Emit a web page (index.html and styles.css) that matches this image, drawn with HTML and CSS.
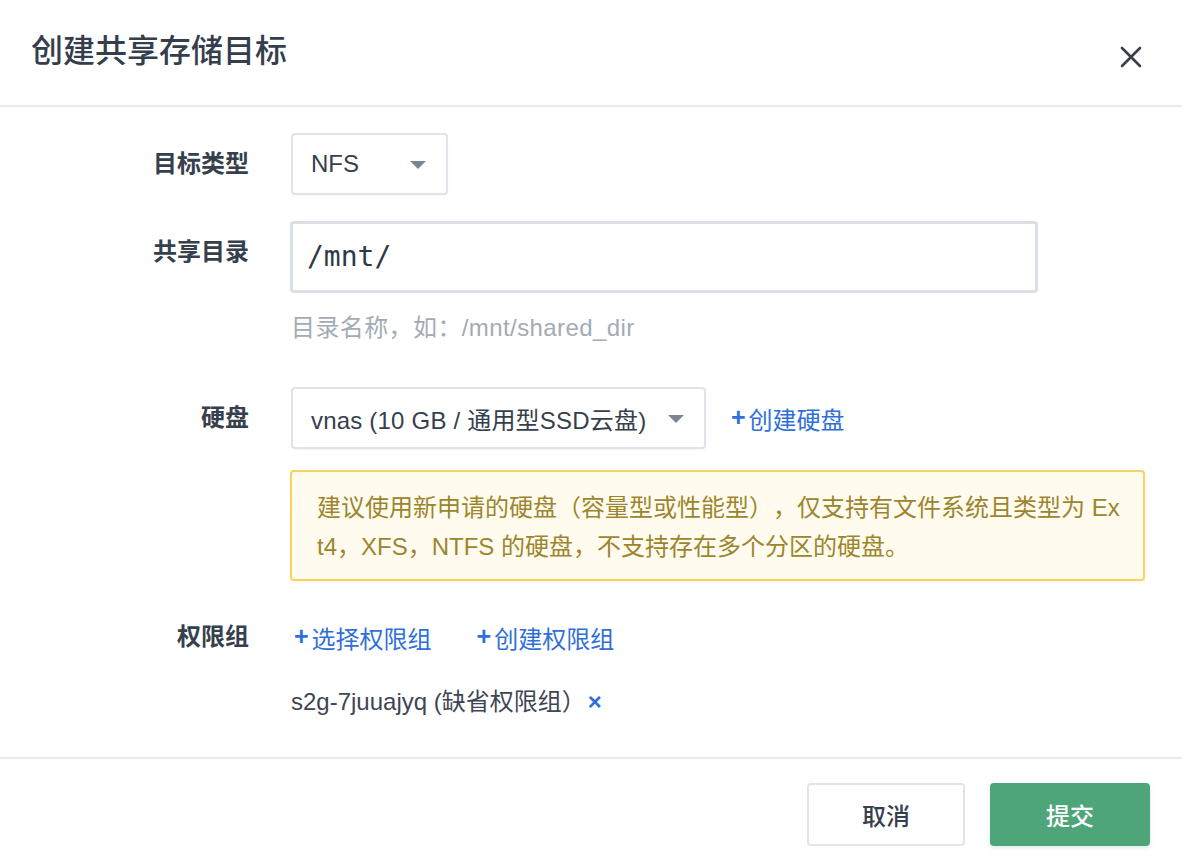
FILE: index.html
```html
<!DOCTYPE html>
<html lang="zh-CN">
<head>
<meta charset="utf-8">
<title>创建共享存储目标</title>
<link rel="stylesheet" href="styles.css">
</head>
<body>
<div class="dialog">
  <div class="header">
    <h1 class="title">创建共享存储目标</h1>
    <button class="close" aria-label="关闭">
      <svg width="22" height="22" viewBox="0 0 22 22"><path d="M2 2L20 20M20 2L2 20" stroke="#36404d" stroke-width="2.6" stroke-linecap="round"/></svg>
    </button>
  </div>
  <div class="body">
    <div class="row row-type">
      <div class="label">目标类型</div>
      <div class="control">
        <div class="select select-type"><span>NFS</span><i class="caret"></i></div>
      </div>
    </div>
    <div class="row row-dir">
      <div class="label">共享目录</div>
      <div class="control">
        <div class="input">/mnt/</div>
        <div class="hint">目录名称，如：/mnt/shared_dir</div>
      </div>
    </div>
    <div class="row row-disk">
      <div class="label">硬盘</div>
      <div class="control">
        <div class="inline">
          <div class="select select-disk"><span>vnas (10 GB / 通用型SSD云盘)</span><i class="caret"></i></div>
          <a class="link link-disk"><b>+</b>创建硬盘</a>
        </div>
        <div class="warning">建议使用新申请的硬盘（容量型或性能型），仅支持有文件系统且类型为 Ext4，XFS，NTFS 的硬盘，不支持存在多个分区的硬盘。</div>
      </div>
    </div>
    <div class="row row-perm">
      <div class="label">权限组</div>
      <div class="control">
        <div class="links">
          <a class="link"><b>+</b>选择权限组</a>
          <a class="link"><b>+</b>创建权限组</a>
        </div>
        <div class="tag">s2g-7juuajyq (缺省权限组）<span class="remove">×</span></div>
      </div>
    </div>
  </div>
  <div class="footer">
    <button class="btn btn-cancel">取消</button>
    <button class="btn btn-submit">提交</button>
  </div>
</div>
</body>
</html>
```
FILE: styles.css
```css
* { box-sizing: border-box; }
html, body { margin: 0; padding: 0; background: #fff; }
body {
  font-family: "Liberation Sans", "Noto Sans CJK SC", sans-serif;
  color: #36404d;
  font-size: 24px;
  text-spacing-trim: space-all;
}
.dialog { width: 1182px; height: 866px; display: flex; flex-direction: column; }
.header {
  height: 107px;
  border-bottom: 2px solid #e8ecf1;
  display: flex;
  align-items: center;
  justify-content: space-between;
  padding: 0 40px 0 31px;
}
.title {
  margin: 0;
  font-size: 32px;
  font-weight: 500;
  color: #343e4c;
  line-height: 40px;
  padding-bottom: 4px;
}
.close {
  border: 0; background: none; padding: 0; width: 22px; height: 22px;
  display: flex; margin-top: 8px;
}
.body { flex: 1; padding-top: 26px; }
.row { display: grid; grid-template-columns: 249px 1fr; column-gap: 41px; }
.label {
  text-align: right;
  font-weight: 700;
  line-height: 62px;
  color: #36404d;
}
.control { min-width: 0; padding-right: 37px; }
.row-type { margin-bottom: 26px; }
.row-dir { margin-bottom: 42px; }
.row-disk { margin-bottom: 25px; }
.select {
  height: 62px;
  border: 2px solid #dfe4ea;
  border-radius: 4px;
  display: flex;
  align-items: center;
  justify-content: space-between;
  padding: 0 20px 0 18px;
  color: #36404d;
  box-shadow: 0 1px 2px rgba(0,0,0,0.04);
}
.select-type { width: 157px; margin-left: 1px; }
.select-disk { width: 415px; margin-left: 1px; }
.select-disk span { letter-spacing: 0.2px; }
.caret {
  width: 0; height: 0;
  border-left: 8px solid transparent;
  border-right: 8px solid transparent;
  border-top: 8px solid #7c8590;
  margin-top: 2px;
}
.input {
  width: 748px;
  height: 72px;
  border: 3px solid #dbe0e7;
  border-radius: 4px;
  font-family: "DejaVu Sans Mono", monospace;
  font-size: 28px;
  line-height: 66px;
  padding-left: 14px;
  color: #2f3845;
}
.hint {
  margin-top: 18px;
  line-height: 34px;
  color: #a3abb5;
  padding-left: 1px;
  letter-spacing: 0.4px;
}
.inline { display: flex; align-items: center; }
.link { color: #2f6fd9; cursor: pointer; display: inline-flex; align-items: center; }
.link b { font-weight: 700; margin-right: 3px; font-size: 25px; line-height: 28px; margin-top: -2px; }
.link-disk { margin-left: 25px; }
.warning {
  margin-top: 21px;
  width: 855px;
  border: 2px solid #f6d45d;
  border-radius: 4px;
  background: #fffcef;
  color: #9c852d;
  line-height: 39px;
  padding: 16px 22px 13px 25px;
  word-break: break-all;
  box-shadow: 0 1px 3px rgba(0,0,0,0.05);
}
.links { display: flex; align-items: center; height: 62px; gap: 45px; padding-left: 4px; }
.tag { margin-top: 17px; line-height: 34px; color: #3d4654; padding-left: 1px; }
.remove { color: #2f6fd9; font-weight: 700; margin-left: 2px; }
.footer {
  height: 109px;
  border-top: 2px solid #e8ecf1;
  display: flex;
  justify-content: flex-end;
  align-items: flex-start;
  padding: 24px 32px 0 0;
  gap: 25px;
}
.btn {
  height: 63px;
  font-family: "Liberation Sans", "Noto Sans CJK SC", sans-serif;
  font-size: 24px;
  font-weight: 500;
  border-radius: 4px;
  cursor: pointer;
}
.btn-cancel { width: 158px; background: #fff; border: 2px solid #e0e5ec; color: #36404d; }
.btn-submit { width: 160px; background: #4ea579; border: 0; color: #fff; box-shadow: 0 2px 4px rgba(78,165,121,0.2); }
```
